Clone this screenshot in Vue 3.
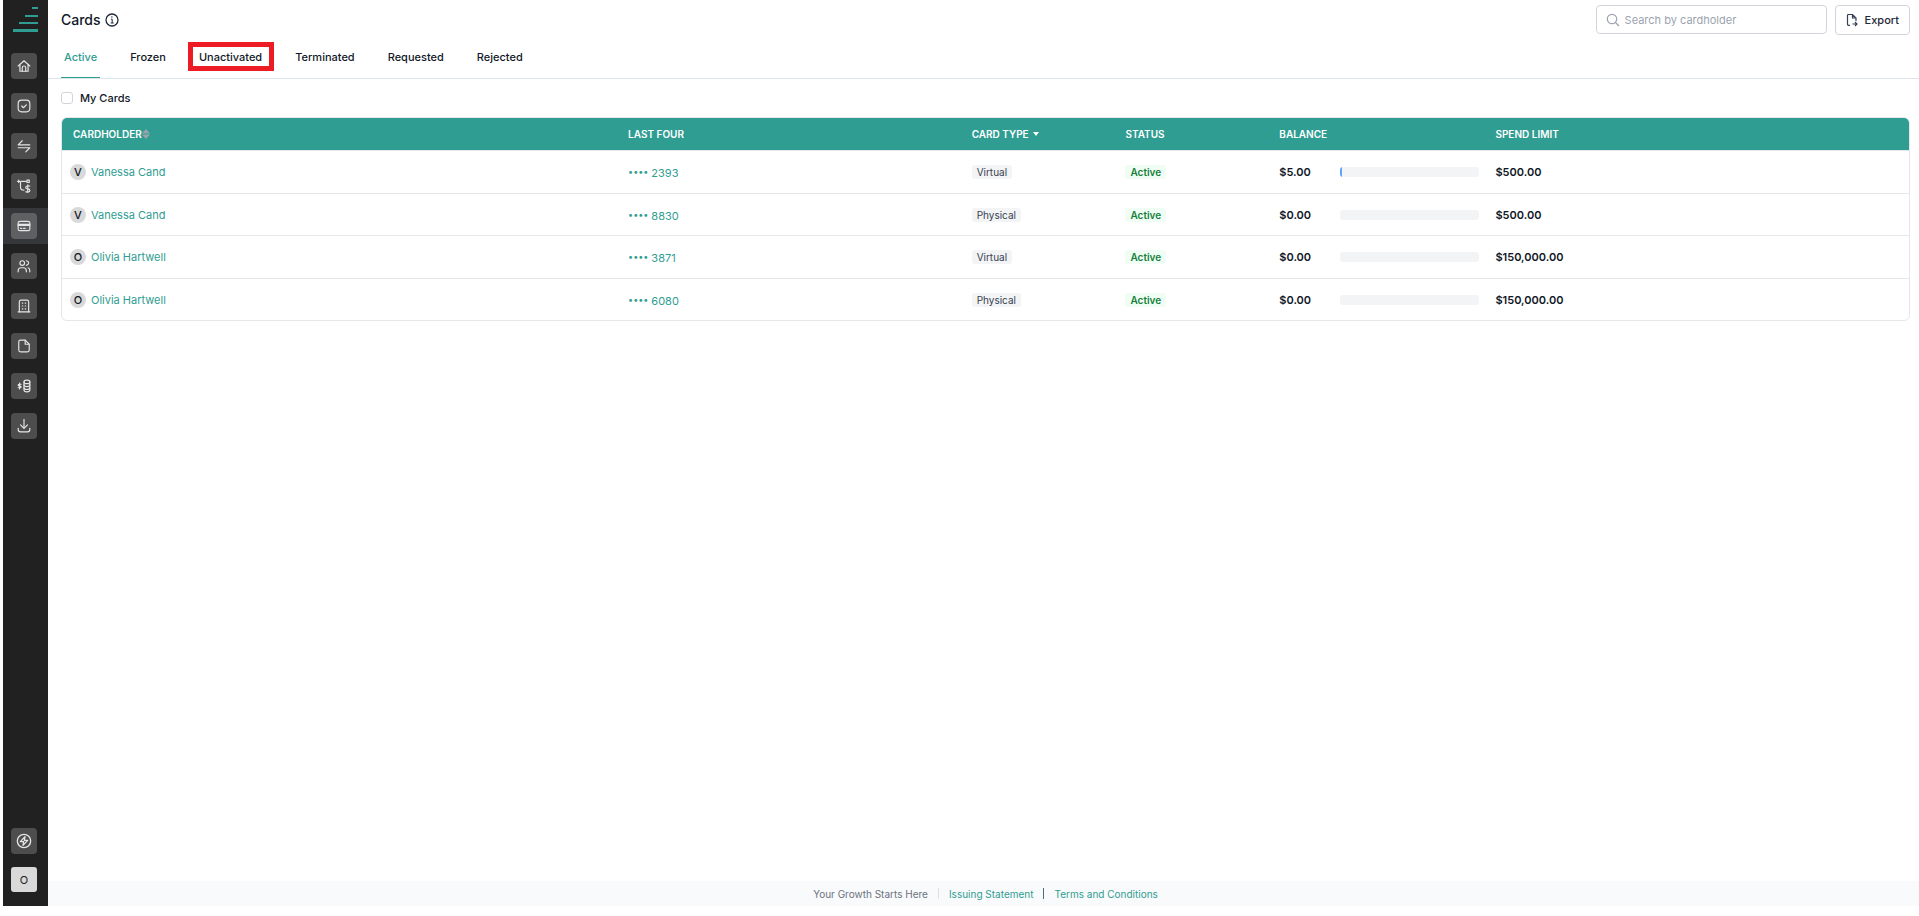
<template>
  <div class="app-shell">
    <aside class="sidebar">
      <a href="#" class="logo" aria-label="Dashboard">
        <svg width="25" height="25" viewBox="0 0 25 25" fill="#2f9d92">
          <rect x="19" y="0" width="6" height="2" />
          <rect x="12" y="8" width="13" height="2" />
          <rect x="6" y="15" width="19" height="2" />
          <rect x="0" y="22" width="25" height="3" />
        </svg>
      </a>

      <nav class="nav" aria-label="Main">
        <a
          v-for="item in navItems"
          :key="item.label"
          href="#"
          class="nav-item"
          :class="{ current: item.label === 'Cards' }"
          :aria-label="item.label"
        >
          <span class="nav-tile">
            <svg class="icon" width="14" height="14" viewBox="0 0 24 24">
              <path v-for="d in item.paths" :key="d" :d="d" />
            </svg>
          </span>
        </a>
      </nav>

      <div class="sidebar-bottom">
        <button type="button" class="nav-tile" aria-label="Quick actions">
          <svg class="icon" width="16" height="16" viewBox="0 0 24 24">
            <circle cx="12" cy="12" r="10" />
            <path d="M13.5 5.5 6.5 13h5l-1 5.5 7-7.5h-5z" />
          </svg>
        </button>
        <button type="button" class="user-tile">O</button>
      </div>
    </aside>

    <div class="page">
      <header class="page-header">
        <h1>Cards</h1>
        <svg class="info" width="14" height="14" viewBox="0 0 14 14" fill="none" stroke="#1f2937">
          <circle cx="7" cy="7" r="6" stroke-width="1.3" />
          <path d="M6 6.2h1.2V10M5.7 10h3" />
          <path d="M6.4 4h1" stroke-width="1.4" />
        </svg>

        <div class="header-actions">
          <label class="search-box">
            <svg width="14" height="14" viewBox="0 0 14 14" fill="none" stroke="#9ca3af" stroke-width="1.2">
              <circle cx="6" cy="6" r="4.7" />
              <path d="M9.5 9.5 13 13" />
            </svg>
            <input v-model="search" type="text" placeholder="Search by cardholder" aria-label="Search by cardholder" />
          </label>
          <button type="button" class="btn-export">
            <svg width="12" height="14" viewBox="0 0 12 14" fill="none" stroke="#374151" stroke-width="1.2">
              <path d="M4 12.3H2.5a1 1 0 0 1-1-1V2.5a1 1 0 0 1 1-1h4L10 5v3M6.5 1.5V5H10" />
              <path d="M6.5 11H11M9 9l2 2-2 2" />
            </svg>
            Export
          </button>
        </div>
      </header>

      <nav class="tabs" aria-label="Card status">
        <button
          v-for="tab in tabs"
          :key="tab"
          type="button"
          class="tab"
          :class="{ active: tab === activeTab, marked: tab === 'Unactivated' }"
          @click="activeTab = tab"
        >
          {{ tab }}
        </button>
      </nav>

      <main class="content">
        <label class="my-cards">
          <input v-model="onlyMine" type="checkbox" />
          My Cards
        </label>

        <div class="table-wrap">
          <table>
            <colgroup>
              <col class="col-holder" />
              <col class="col-last" />
              <col class="col-type" />
              <col class="col-status" />
              <col class="col-balance" />
              <col />
            </colgroup>
            <thead>
              <tr>
                <th class="holder-head">
                  <span class="th-inner">
                    CARDHOLDER
                    <svg width="8" height="10" viewBox="0 0 8 10" fill="#9ca3af">
                      <path d="M4 0 8 4.5H0zM4 10 0 5.5h8z" />
                    </svg>
                  </span>
                </th>
                <th>LAST FOUR</th>
                <th>
                  <span class="th-inner filter">
                    CARD TYPE
                    <svg width="6" height="4" viewBox="0 0 6 4" fill="#fff"><path d="M0 0h6L3 4z" /></svg>
                  </span>
                </th>
                <th>STATUS</th>
                <th>BALANCE</th>
                <th>SPEND LIMIT</th>
              </tr>
            </thead>
            <tbody>
              <tr v-for="card in visibleCards" :key="card.lastFour">
                <td class="holder-cell">
                  <div class="holder">
                    <span class="avatar">{{ card.holder[0] }}</span>
                    <a href="#">{{ card.holder }}</a>
                  </div>
                </td>
                <td>
                  <a href="#" class="last-four"><span class="dots">••••</span>{{ card.lastFour }}</a>
                </td>
                <td><span class="badge">{{ card.type }}</span></td>
                <td><span class="badge green">{{ card.status }}</span></td>
                <td class="balance-cell">
                  <div class="balance">
                    <span class="amount">{{ money(card.balance) }}</span>
                    <span class="bar">
                      <span class="bar-fill" :style="{ width: (card.balance / card.limit) * 100 + '%' }"></span>
                    </span>
                  </div>
                </td>
                <td class="amount">{{ money(card.limit) }}</td>
              </tr>
            </tbody>
          </table>
        </div>
      </main>

      <footer class="page-footer">
        <span>Your Growth Starts Here</span>
        <i class="sep light"></i>
        <a href="#">Issuing Statement</a>
        <i class="sep"></i>
        <a href="#">Terms and Conditions</a>
      </footer>
    </div>
  </div>
</template>

<script setup>
import { ref, computed } from 'vue';

const search = ref('');
const onlyMine = ref(false);
const activeTab = ref('Active');

const tabs = ['Active', 'Frozen', 'Unactivated', 'Terminated', 'Requested', 'Rejected'];

const navItems = [
  { label: 'Home', paths: ['M2 12 12 3l10 9', 'M5 10v11h14V10', 'M9 21v-6a3 3 0 0 1 6 0v6'] },
  { label: 'Approvals', paths: ['M8 2h8q6 0 6 6v8q0 6-6 6H8q-6 0-6-6V8q0-6 6-6z', 'm8 12 3 3 5-5'] },
  { label: 'Transactions', paths: ['M22 10H2l7-7', 'M2 15h20l-7 7'] },
  {
    label: 'Payments',
    paths: [
      'M1 4h4M7 4h8M3 2v4M17 2v4h4V2z',
      'M6 5v9q0 5 6 5',
      'M22 12h-4q-3 0-3 2.5t3 2.5h1q3 0 3 2.5T19 22h-4M18.5 10v14'
    ]
  },
  {
    label: 'Cards',
    paths: ['M5 4h14q3 0 3 3v10q0 3-3 3H5q-3 0-3-3V7q0-3 3-3z', 'M2 9h20M2 11h20', 'M6 16h2M11 16h3']
  },
  {
    label: 'Users',
    paths: [
      'M9 3a4 4 0 1 0 0 8 4 4 0 0 0 0-8z',
      'M2 22v-2q0-5 5-5h4q5 0 5 5v2',
      'M16 3q4 1 4 4t-4 4',
      'M19 15q3 1 3 5v2'
    ]
  },
  {
    label: 'Company',
    paths: ['M2 22h20', 'M4 22V5q0-3 3-3h10q3 0 3 3v17', 'M9 7h1M14 7h1M9 12h1M14 12h1M9 17h1M14 17h1']
  },
  { label: 'Documents', paths: ['M14 2H6Q3 2 3 5v14q0 3 3 3h12q3 0 3-3V9z', 'M14 2v7h7'] },
  {
    label: 'Funds',
    paths: [
      'M7 9H4q-2 0-2 1.5T4 12h1q2 0 2 1.5T5 15H2M4.5 7v10',
      'M17 2q5 0 5 3t-5 3-5-3 5-3z',
      'M12 5v14q0 3 5 3t5-3V5',
      'M12 10q0 3 5 3t5-3M12 15q0 3 5 3t5-3'
    ]
  },
  { label: 'Downloads', paths: ['M12 1v14', 'm6 10 6 6 6-6', 'M2 16v2q0 4 4 4h12q4 0 4-4v-2'] }
];

const cards = [
  { holder: 'Vanessa Cand', lastFour: '2393', type: 'Virtual', status: 'Active', balance: 5, limit: 500 },
  { holder: 'Vanessa Cand', lastFour: '8830', type: 'Physical', status: 'Active', balance: 0, limit: 500 },
  { holder: 'Olivia Hartwell', lastFour: '3871', type: 'Virtual', status: 'Active', balance: 0, limit: 150000 },
  { holder: 'Olivia Hartwell', lastFour: '6080', type: 'Physical', status: 'Active', balance: 0, limit: 150000 }
];

const visibleCards = computed(() =>
  cards.filter((card) => {
    if (card.status !== activeTab.value) return false;
    if (onlyMine.value && card.holder !== 'Olivia Hartwell') return false;
    return card.holder.toLowerCase().includes(search.value.toLowerCase());
  })
);

const money = (value) => value.toLocaleString('en-US', { style: 'currency', currency: 'USD' });
</script>

<style>
body {
  margin: 0;
  background: #fff;
}
</style>

<style scoped>
.app-shell {
  display: flex;
  box-sizing: border-box;
  min-height: 100vh;
  padding: 0 0 10px 3px;
  font-family: Inter, "Liberation Sans", sans-serif;
  font-size: 11px;
  line-height: 16px;
  color: #111827;
}

a {
  color: #2f9d92;
  text-decoration: none;
}

button {
  font-family: inherit;
  cursor: pointer;
}

/* Sidebar */
.sidebar {
  display: flex;
  flex-direction: column;
  flex: 0 0 45px;
  background: #212121;
}

.logo {
  height: 25px;
  padding: 7px 7px 16px 10px;
}

.logo svg {
  display: block;
}

.nav {
  display: flex;
  flex-direction: column;
  gap: 4px;
}

.nav-item {
  display: flex;
  align-items: center;
  height: 36px;
  padding-left: 8px;
}

.nav-item.current {
  background: #36373b;
}

.nav-tile {
  display: flex;
  align-items: center;
  justify-content: center;
  width: 26px;
  height: 26px;
  padding: 0;
  border: none;
  border-radius: 4px;
  background: #4d4d4d;
}

.current .nav-tile {
  background: #5f6062;
}

.icon {
  fill: none;
  stroke: #e5e5e5;
  stroke-width: 2;
  stroke-linecap: round;
  stroke-linejoin: round;
}

.sidebar-bottom {
  display: flex;
  flex-direction: column;
  gap: 13px;
  margin-top: auto;
  padding: 0 0 14px 8px;
}

.user-tile {
  width: 26px;
  height: 25px;
  padding: 0;
  border: none;
  border-radius: 3px;
  background: #d9d9d9;
  color: #212121;
  font-size: 11px;
}

/* Header */
.page {
  display: flex;
  flex-direction: column;
  flex: 1;
  min-width: 0;
}

.page-header {
  display: flex;
  align-items: center;
  height: 40px;
  padding: 0 9px 0 13px;
}

h1 {
  margin: 0;
  font-size: 14px;
  font-weight: 500;
}

.info {
  margin-left: 4px;
}

.header-actions {
  display: flex;
  align-items: flex-start;
  gap: 8px;
  margin-left: auto;
}

.search-box {
  display: flex;
  align-items: center;
  gap: 5px;
  box-sizing: border-box;
  width: 231px;
  height: 29px;
  padding: 0 9px;
  border: 1px solid #d1d5db;
  border-radius: 4px;
}

.search-box input {
  flex: 1;
  min-width: 0;
  padding: 0;
  border: none;
  outline: none;
  font-family: inherit;
  font-size: 11px;
}

.search-box input::placeholder {
  color: #9ca3af;
}

.btn-export {
  display: flex;
  align-items: center;
  gap: 7px;
  height: 30px;
  padding: 0 10px;
  border: 1px solid #d1d5db;
  border-radius: 4px;
  background: #fff;
  color: #1f2937;
  font-size: 11px;
  font-weight: 500;
}

/* Tabs */
.tabs {
  display: flex;
  gap: 27px;
  height: 38px;
  padding-left: 13px;
  border-bottom: 1px solid #dfe5ea;
}

.tab {
  position: relative;
  padding: 0 3px 3px;
  border: none;
  border-bottom: 1px solid transparent;
  background: none;
  color: #111827;
  font-size: 11px;
  font-weight: 500;
}

.tab.active {
  border-bottom-color: #2f9d92;
  color: #2f9d92;
}

.tab.marked::after {
  content: "";
  position: absolute;
  top: 2px;
  left: -8px;
  right: -9px;
  height: 19px;
  border: 5px solid #ed1c24;
}

/* Card list */
.content {
  padding: 10px 9px 0 13px;
}

.my-cards {
  display: flex;
  align-items: center;
  gap: 7px;
  width: fit-content;
  height: 18px;
  font-weight: 500;
}

.my-cards input {
  appearance: none;
  width: 12px;
  height: 12px;
  margin: 0;
  border: 1px solid #d1d5db;
  border-radius: 3px;
  background: #fff;
}

.my-cards input:checked {
  background: #2f9d92;
}

.table-wrap {
  margin-top: 10px;
  border: 1px solid #e5e7eb;
  border-radius: 6px;
  overflow: hidden;
}

table {
  width: 100%;
  table-layout: fixed;
  border-collapse: separate;
  border-spacing: 0;
}

.col-holder { width: 30%; }
.col-last { width: 18.6%; }
.col-type { width: 8.33%; }
.col-status { width: 8.33%; }
.col-balance { width: 11.7%; }

th {
  height: 32px;
  padding: 0 12px;
  border-bottom: 1px solid #e5e7eb;
  background: #2f9d92;
  color: #fff;
  font-size: 10px;
  font-weight: 600;
  line-height: 12px;
  text-align: left;
}

.holder-head {
  padding-left: 11px;
}

.th-inner {
  display: inline-flex;
  align-items: center;
}

.th-inner.filter {
  gap: 4px;
}

td {
  height: 41px;
  padding: 0 12px;
  border-bottom: 1px solid #e5e7eb;
}

tbody tr:nth-child(odd) td {
  height: 42px;
}

tbody tr:last-child td {
  border-bottom: none;
}

.holder-cell {
  padding-left: 8px;
}

.holder {
  display: flex;
  align-items: center;
  gap: 5px;
}

.avatar {
  width: 16px;
  height: 16px;
  border-radius: 50%;
  background: #d9d9d9;
  font-weight: 500;
  text-align: center;
}

.last-four {
  display: inline-flex;
  align-items: flex-start;
  gap: 3px;
}

.dots {
  font-size: 9px;
  line-height: 14px;
}

.badge {
  display: inline-block;
  padding: 0 5px;
  border-radius: 3px;
  background: #f3f4f6;
  color: #374151;
  font-size: 10px;
  line-height: 14px;
}

.badge.green {
  background: #f0fdf4;
  color: #15803d;
  font-weight: 600;
}

.balance-cell {
  padding-right: 4px;
}

.balance {
  display: flex;
  align-items: center;
}

.amount {
  font-weight: 600;
}

.balance .amount {
  flex: 0 0 61px;
}

.bar {
  display: flex;
  flex: 1;
  height: 10px;
  border-radius: 3px;
  background: #f3f4f6;
  overflow: hidden;
}

.bar-fill {
  background: #60a5fa;
}

/* Footer */
.page-footer {
  display: flex;
  align-items: center;
  justify-content: center;
  gap: 10px;
  height: 25px;
  margin-top: auto;
  padding-left: 4px;
  background: #f9fafb;
  color: #6b7280;
  font-size: 10px;
}

.sep {
  width: 1px;
  height: 11px;
  background: #4b6f73;
}

.sep.light {
  background: #e2dfe3;
}
</style>
